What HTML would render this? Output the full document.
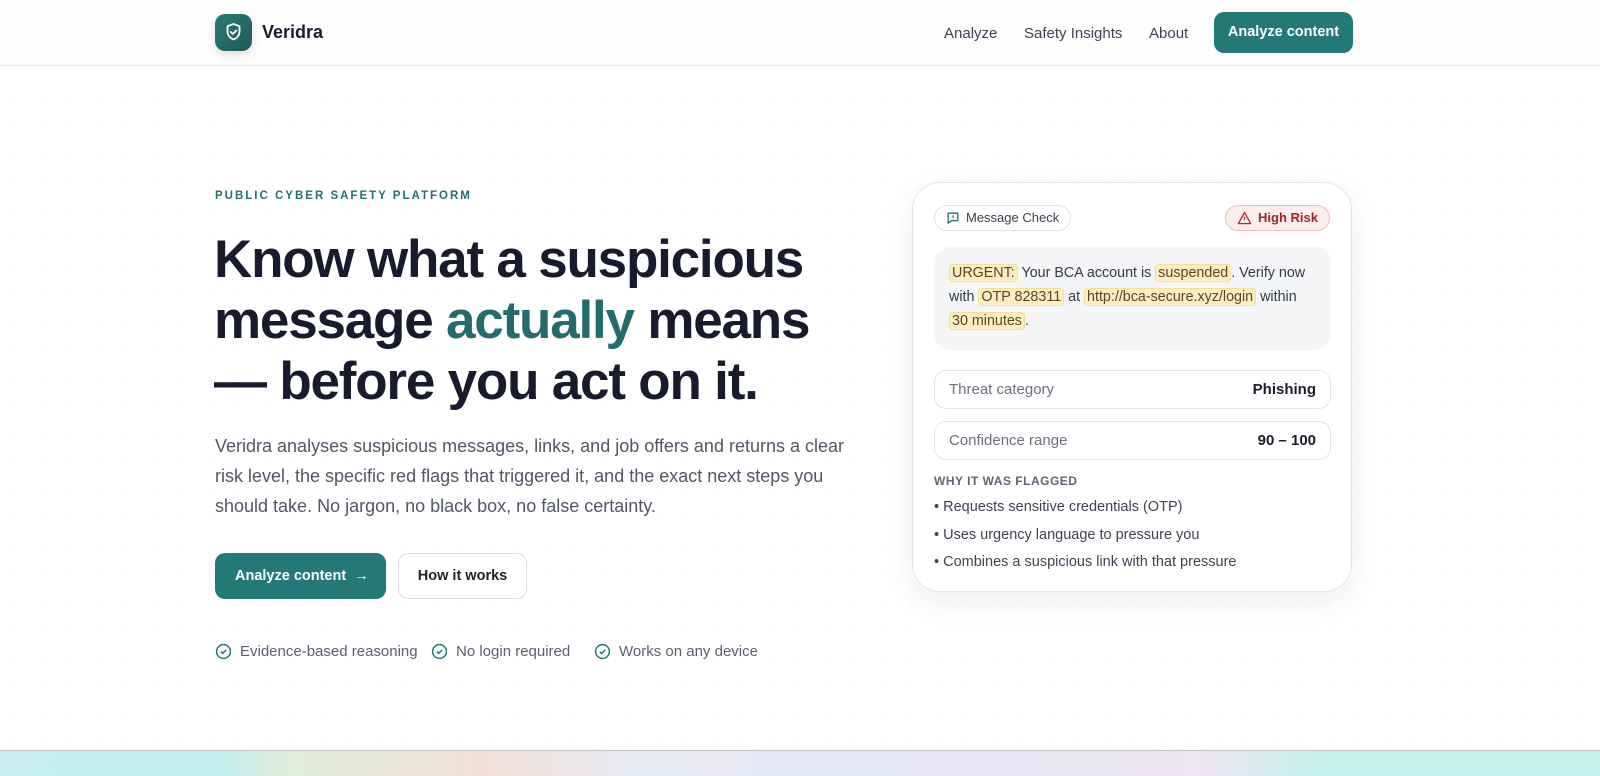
<!DOCTYPE html>
<html><head><meta charset="utf-8"><style>
*{box-sizing:border-box;margin:0;padding:0}
body{width:1600px;height:776px;overflow:hidden;background:#fff;font-family:"Liberation Sans",sans-serif;color:#1a1d2e;position:relative;
background-image:radial-gradient(#f2f3f5 1px,transparent 1px);background-size:28px 28px}
.nav{position:absolute;top:0;left:0;width:1600px;height:66px;background:#fdfdfe;border-bottom:1px solid #e6e8ec}
.logo{position:absolute;left:215px;top:14px;width:37px;height:37px;border-radius:10px;background:linear-gradient(135deg,#2a7a74,#1d5a5a);box-shadow:0 4px 10px rgba(0,0,0,.12)}
.brand{position:absolute;left:262px;top:22px;font-size:18px;font-weight:600;color:#1a1d2e}
.nl{position:absolute;top:25px;font-size:15px;color:#3d4352}
.nbtn{position:absolute;left:1214px;top:12px;width:139px;height:41px;border-radius:10px;background:#237878;color:#fff;font-size:14.5px;font-weight:700;text-align:center;line-height:41px}
.eyebrow{position:absolute;left:215px;top:190px;font-size:11.5px;letter-spacing:2px;color:#237070;font-weight:600}
h1{position:absolute;left:214px;top:229px;font-size:53px;line-height:61px;font-weight:700;letter-spacing:-1.2px;color:#181a2e;width:640px}
h1 span{color:#246b6b}
.lead{position:absolute;left:215px;top:431px;width:650px;font-size:18px;line-height:30px;color:#505666}
.b1{position:absolute;left:215px;top:553px;width:171px;height:46px;border-radius:10px;background:#237878;color:#fff;font-size:14.5px;font-weight:700;line-height:46px;padding-left:20px}
.b2{position:absolute;left:398px;top:553px;width:129px;height:46px;border-radius:10px;border:1px solid #dcdfe4;background:#fff;font-size:14.5px;font-weight:600;line-height:44px;text-align:center;color:#222}
.chk{position:absolute;top:643px;font-size:15px;color:#5a6070;display:flex;align-items:center;gap:8px}
.card{position:absolute;left:912px;top:182px;width:440px;height:410px;border:1px solid #e3e5ea;border-radius:28px;background:#fff;box-shadow:0 10px 30px rgba(20,30,50,.08)}
.pill{position:absolute;height:26px;border-radius:13px;font-size:13px;line-height:24px;display:flex;align-items:center;gap:6px;padding:0 11px}
.msg{position:absolute;left:21px;top:64px;width:397px;height:103px;border-radius:16px;background:#f4f5f7;padding:14px 15px;font-size:14.3px;line-height:24px;color:#333a48;white-space:nowrap}
.hl{background:#fdeec0;border:1px solid #f6dc9a;border-radius:4px;padding:0 2px;color:#5a4520}
.row{position:absolute;left:21px;width:397px;height:39px;border:1px solid #e1e4e9;border-radius:12px;font-size:15px;line-height:37px;padding:0 14px;color:#6a7080}
.row b{float:right;color:#1a1d2e}
.why{position:absolute;left:21px;top:291px;font-size:12px;letter-spacing:.5px;font-weight:600;color:#5d6474}
.bl{position:absolute;left:21px;font-size:14.5px;color:#3d4352}
.strip{position:absolute;left:0;top:750px;width:1600px;height:26px;border-top:1px solid #b8c4c4;background:linear-gradient(90deg,#c8eef0,#c2eef0 14%,#e0eed8 18%,#f2e0d8 30%,#e8eaf5 40%,#e6e6f6 60%,#eee6f2 75%,#c6f0ee 82%,#c6f0ee)}
</style></head><body>
<div class="nav">
<div class="logo"><svg width="37" height="37" viewBox="0 0 37 37"><path d="M18.5 10l6 2.2v5c0 4-2.6 7-6 8.3-3.4-1.3-6-4.3-6-8.3v-5z" fill="none" stroke="#fff" stroke-width="1.8" stroke-linejoin="round"/><path d="M15.8 18l2 2 3.6-3.6" fill="none" stroke="#fff" stroke-width="1.8" stroke-linecap="round" stroke-linejoin="round"/></svg></div>
<div class="brand">Veridra</div>
<div class="nl" style="left:944px">Analyze</div>
<div class="nl" style="left:1024px">Safety Insights</div>
<div class="nl" style="left:1149px">About</div>
<div class="nbtn">Analyze content</div>
</div>
<div class="eyebrow">PUBLIC CYBER SAFETY PLATFORM</div>
<h1>Know what a suspicious<br>message <span>actually</span> means<br>— before you act on it.</h1>
<div class="lead">Veridra analyses suspicious messages, links, and job offers and returns a clear risk level, the specific red flags that triggered it, and the exact next steps you should take. No jargon, no black box, no false certainty.</div>
<div class="b1">Analyze content &nbsp;→</div>
<div class="b2">How it works</div>
<div class="chk" style="left:215px"><svg width="17" height="17" viewBox="0 0 16 16"><circle cx="8" cy="8" r="6.5" fill="none" stroke="#237878" stroke-width="1.4"/><path d="M5.5 8.2l1.7 1.6 3.3-3.3" fill="none" stroke="#237878" stroke-width="1.4"/></svg>Evidence-based reasoning</div>
<div class="chk" style="left:431px"><svg width="17" height="17" viewBox="0 0 16 16"><circle cx="8" cy="8" r="6.5" fill="none" stroke="#237878" stroke-width="1.4"/><path d="M5.5 8.2l1.7 1.6 3.3-3.3" fill="none" stroke="#237878" stroke-width="1.4"/></svg>No login required</div>
<div class="chk" style="left:594px"><svg width="17" height="17" viewBox="0 0 16 16"><circle cx="8" cy="8" r="6.5" fill="none" stroke="#237878" stroke-width="1.4"/><path d="M5.5 8.2l1.7 1.6 3.3-3.3" fill="none" stroke="#237878" stroke-width="1.4"/></svg>Works on any device</div>
<div class="card">
<div class="pill" style="left:21px;top:22px;border:1px solid #dfe2e7;color:#3a4050"><svg width="14" height="14" viewBox="0 0 16 16"><path d="M2.5 2.5h11v8.5H6l-3.5 3z" fill="none" stroke="#237070" stroke-width="1.5" stroke-linejoin="round"/><path d="M8 5v2.5M8 9v.3" stroke="#237070" stroke-width="1.5"/></svg>Message Check</div>
<div class="pill" style="right:21px;top:22px;border:1px solid #f3b9b9;background:#fdeeee;color:#9c2424;font-weight:600"><svg width="15" height="14" viewBox="0 0 16 15"><path d="M8 1.5l6.5 12h-13z" fill="none" stroke="#b02a2a" stroke-width="1.4" stroke-linejoin="round"/><path d="M8 6v3.5M8 11v.3" stroke="#b02a2a" stroke-width="1.4"/></svg>High Risk</div>
<div class="msg"><span class="hl">URGENT:</span> Your BCA account is <span class="hl">suspended</span>. Verify now<br>with <span class="hl">OTP 828311</span> at <span class="hl">http://bca-secure.xyz/login</span> within<br><span class="hl">30 minutes</span>.</div>
<div class="row" style="top:187px">Threat category<b>Phishing</b></div>
<div class="row" style="top:238px">Confidence range<b>90 – 100</b></div>
<div class="why">WHY IT WAS FLAGGED</div>
<div class="bl" style="top:316px">• Requests sensitive credentials (OTP)</div>
<div class="bl" style="top:344px">• Uses urgency language to pressure you</div>
<div class="bl" style="top:371px">• Combines a suspicious link with that pressure</div>
</div>
<div class="strip"></div>
</body></html>
